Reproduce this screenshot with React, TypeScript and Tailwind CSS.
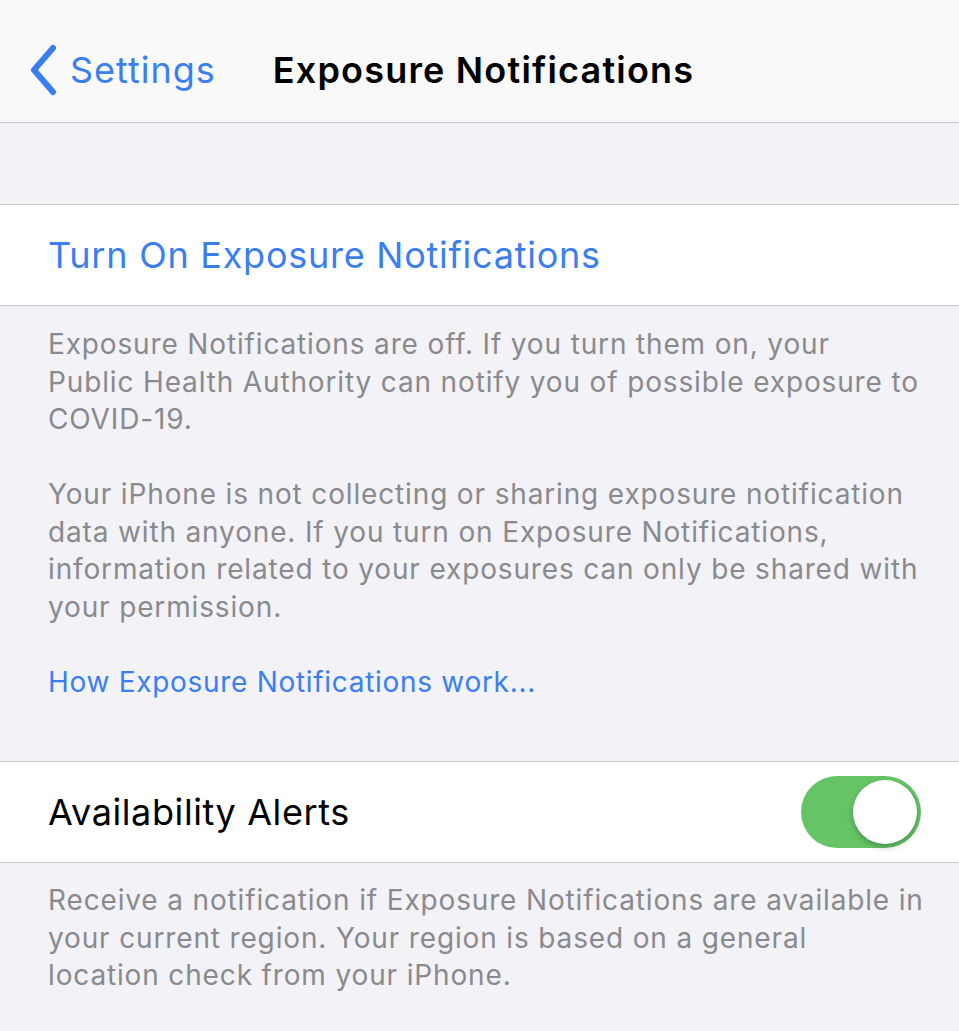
const font = "font-['Inter','Liberation_Sans',sans-serif]";

const Chevron = () => (
  <svg width="30" height="52" viewBox="0 0 30 52" fill="none">
    <path d="M25 4 L6 26 L25 48" stroke="#3a7ef0" strokeWidth="6" strokeLinecap="round" strokeLinejoin="round" />
  </svg>
);

const Toggle = () => (
  <div className="flex h-[72px] w-[120px] items-center justify-end rounded-full bg-[#65c466] p-[4px]">
    <div className="h-[64px] w-[64px] rounded-full bg-white shadow-[0_3px_6px_rgba(0,0,0,0.25)]" />
  </div>
);

// grouped-table footer text; lines are broken by hand so they wrap like the device does
const Footer = ({ children, className = '' }: { children: React.ReactNode; className?: string }) => (
  <div
    className={`pr-[16px] pl-[48px] text-[28px] leading-[37.5px] tracking-[0.85px] whitespace-nowrap text-[#8a8a8e] ${className}`}
  >
    {children}
  </div>
);

const App = () => {
  return (
    <div className={`min-h-[1031px] w-[959px] bg-[#f2f2f7] ${font}`}>
      <header className="grid h-[123px] grid-cols-[1fr_auto_1fr] items-center border-b border-[#c6c6c8] bg-[#f9f9f9] pt-[18px]">
        <div className="flex items-center gap-[12px] pl-[28px] text-[36px] tracking-[1px] text-[#3a7ef0]">
          <Chevron />
          <span>Settings</span>
        </div>
        <h1 className="pl-[8px] text-[36px] font-semibold tracking-[1.2px] text-black">Exposure Notifications</h1>
        <div />
      </header>

      <div className="h-[81px]" />

      <div className="flex h-[102px] items-center border-y border-[#c6c6c8] bg-white px-[48px]">
        <span className="text-[36px] tracking-[0.75px] text-[#3a7ef0]">Turn On Exposure Notifications</span>
      </div>

      <Footer className="pt-[20px] pb-[60px]">
        <p>
          Exposure Notifications are off. If you turn them on, your
          <br />
          Public Health Authority can notify you of possible exposure to
          <br />
          COVID-19.
        </p>
        <p className="mt-[37.5px]">
          Your iPhone is not collecting or sharing exposure notification
          <br />
          data with anyone. If you turn on Exposure Notifications,
          <br />
          information related to your exposures can only be shared with
          <br />
          your permission.
        </p>
        <p className="mt-[37.5px] tracking-[0.7px] text-[#3a7ef0]">How Exposure Notifications work...</p>
      </Footer>

      <div className="flex h-[102px] items-center justify-between border-y border-[#c6c6c8] bg-white pr-[38px] pl-[48px]">
        <span className="text-[36px] tracking-[0.6px] text-black">Availability Alerts</span>
        <Toggle />
      </div>

      <Footer className="pt-[19px]">
        <p>
          Receive a notification if Exposure Notifications are available in
          <br />
          your current region. Your region is based on a general
          <br />
          location check from your iPhone.
        </p>
      </Footer>
    </div>
  );
};

export default App;
